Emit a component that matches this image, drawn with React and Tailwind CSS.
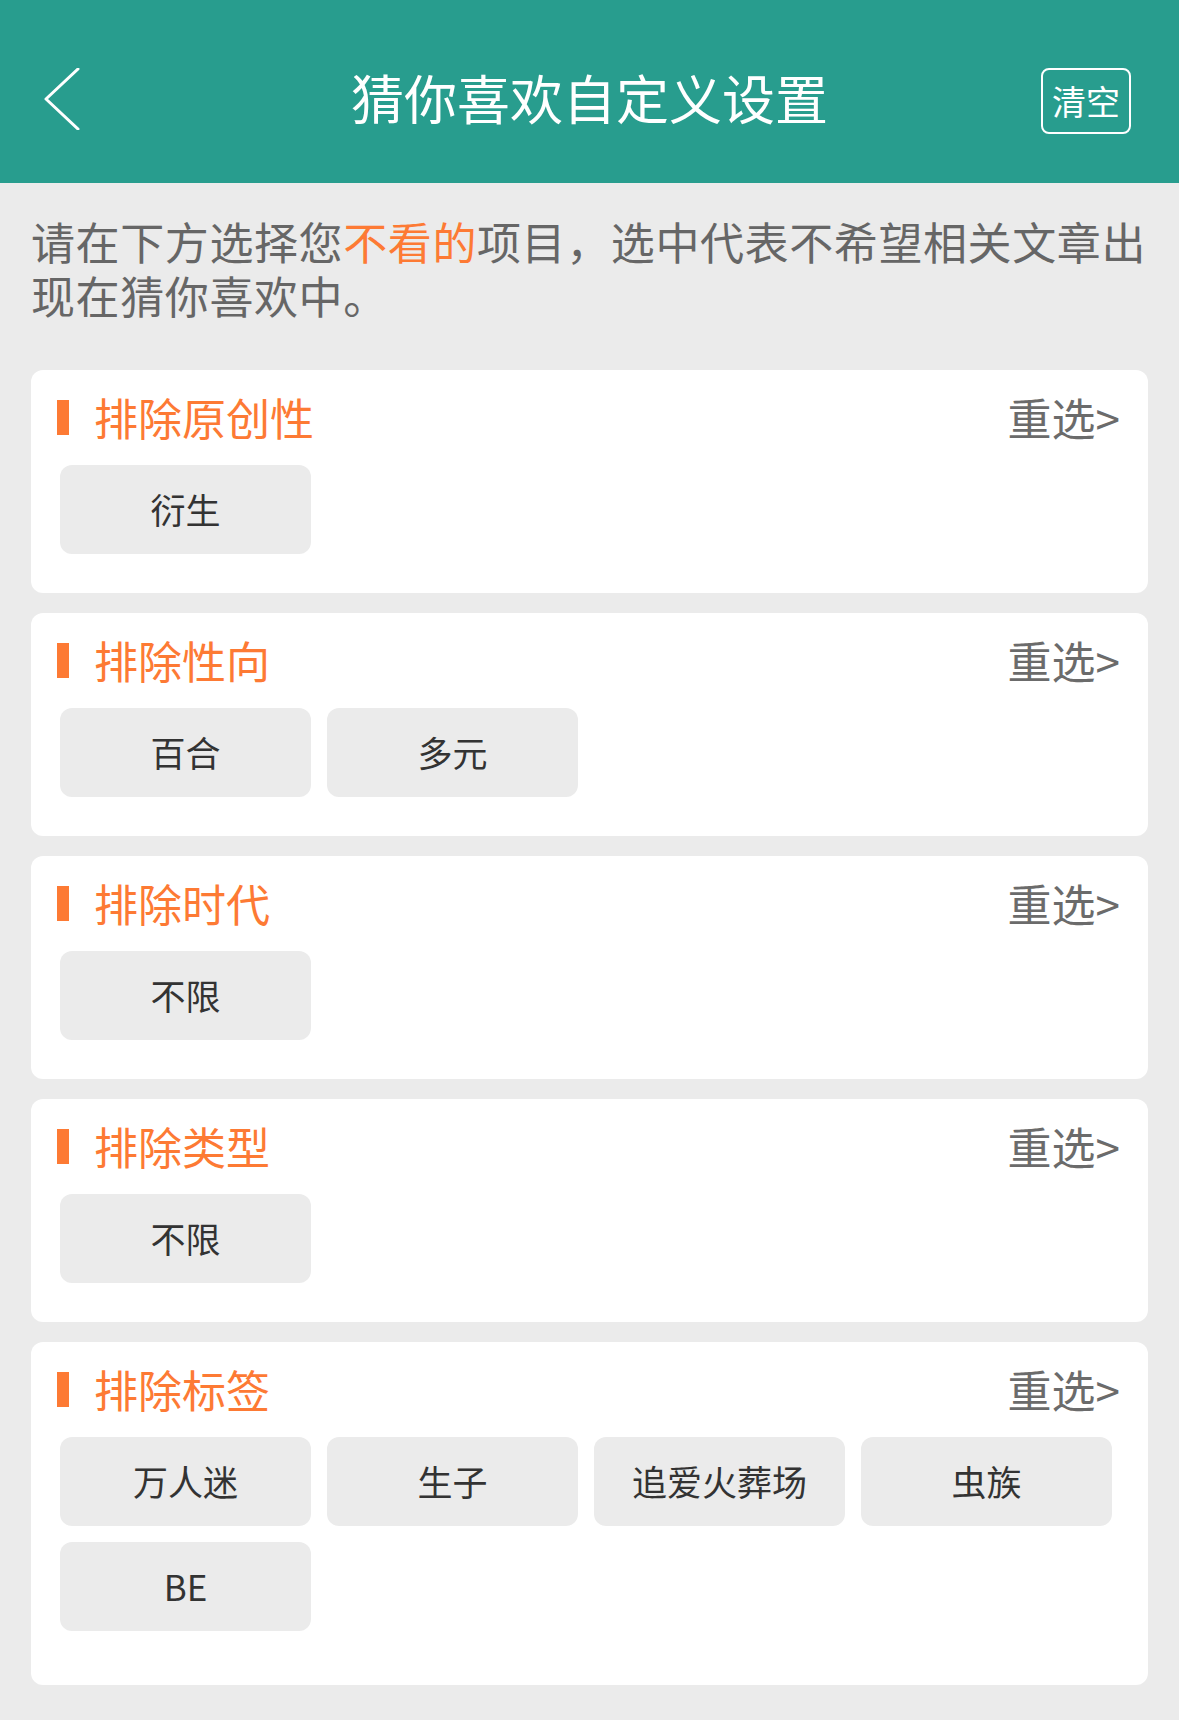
import { useState } from 'react'

const FONT = { fontFamily: '"Noto Sans CJK SC", "Noto Sans", sans-serif' }

const sections = [
  { title: '排除原创性', tags: ['衍生'] },
  { title: '排除性向', tags: ['百合', '多元'] },
  { title: '排除时代', tags: ['不限'] },
  { title: '排除类型', tags: ['不限'] },
  { title: '排除标签', tags: ['万人迷', '生子', '追爱火葬场', '虫族', 'BE'], last: true },
]

const BackIcon = () => (
  <svg width="36" height="62" viewBox="0 0 36 62" fill="none">
    <polyline points="34,1 2,31 34,61" stroke="#ffffff" strokeWidth="3" strokeLinecap="round" strokeLinejoin="round" />
  </svg>
)

const Section = ({ title, tags, last }) => (
  <div className={`bg-white rounded-[12px] pt-[20px] px-[26px] ${last ? 'pb-[54px]' : 'pb-[39px]'}`}>
    <div className="flex items-center justify-between h-[54px]">
      <div className="flex items-center">
        <span className="w-[12px] h-[35px] bg-[#fd7a34]" />
        <span className="ml-[25px] text-[44px] leading-[54px] text-[#fd7a34]">{title}</span>
      </div>
      <span className="mr-[2px] text-[44px] leading-[54px] text-[#6b6b6b]">重选&gt;</span>
    </div>
    <div className="mt-[21px] pl-[3px] flex flex-wrap gap-x-[16px] gap-y-[16px]">
      {tags.map((t) => (
        <div
          key={t}
          className="w-[251px] h-[89px] rounded-[12px] bg-[#ebebeb] flex items-center justify-center text-[35px] text-[#333333]"
        >
          {t}
        </div>
      ))}
    </div>
  </div>
)

export default function App() {
  const [items] = useState(sections)

  return (
    <div className="w-[1179px] min-h-[1720px] bg-[#ebebeb]" style={FONT}>
      {/* header */}
      <div className="h-[183px] bg-[#289d8e] grid grid-cols-[1fr_auto_1fr] items-center">
        <div className="pl-[44px] pt-[14px]">
          <BackIcon />
        </div>
        <h1 className="text-[53px] leading-none text-white pt-[12px]">猜你喜欢自定义设置</h1>
        <div className="flex justify-end pr-[48px] pt-[18px]">
          <div className="w-[90px] h-[66px] border-2 border-white rounded-[8px] flex items-center justify-center text-[34px] leading-none text-white">
            清空
          </div>
        </div>
      </div>

      <div className="px-[31px] pt-[31px]">
        <p className="text-[44px] leading-[54px] text-[#666666] tracking-[0.6px]">
          请在下方选择您<span className="text-[#fd7a34]">不看的</span>项目，选中代表不希望相关文章出现在猜你喜欢中。
        </p>

        <div className="mt-[48px] flex flex-col gap-[20px]">
          {items.map((s) => (
            <Section key={s.title} {...s} />
          ))}
        </div>
      </div>
    </div>
  )
}
